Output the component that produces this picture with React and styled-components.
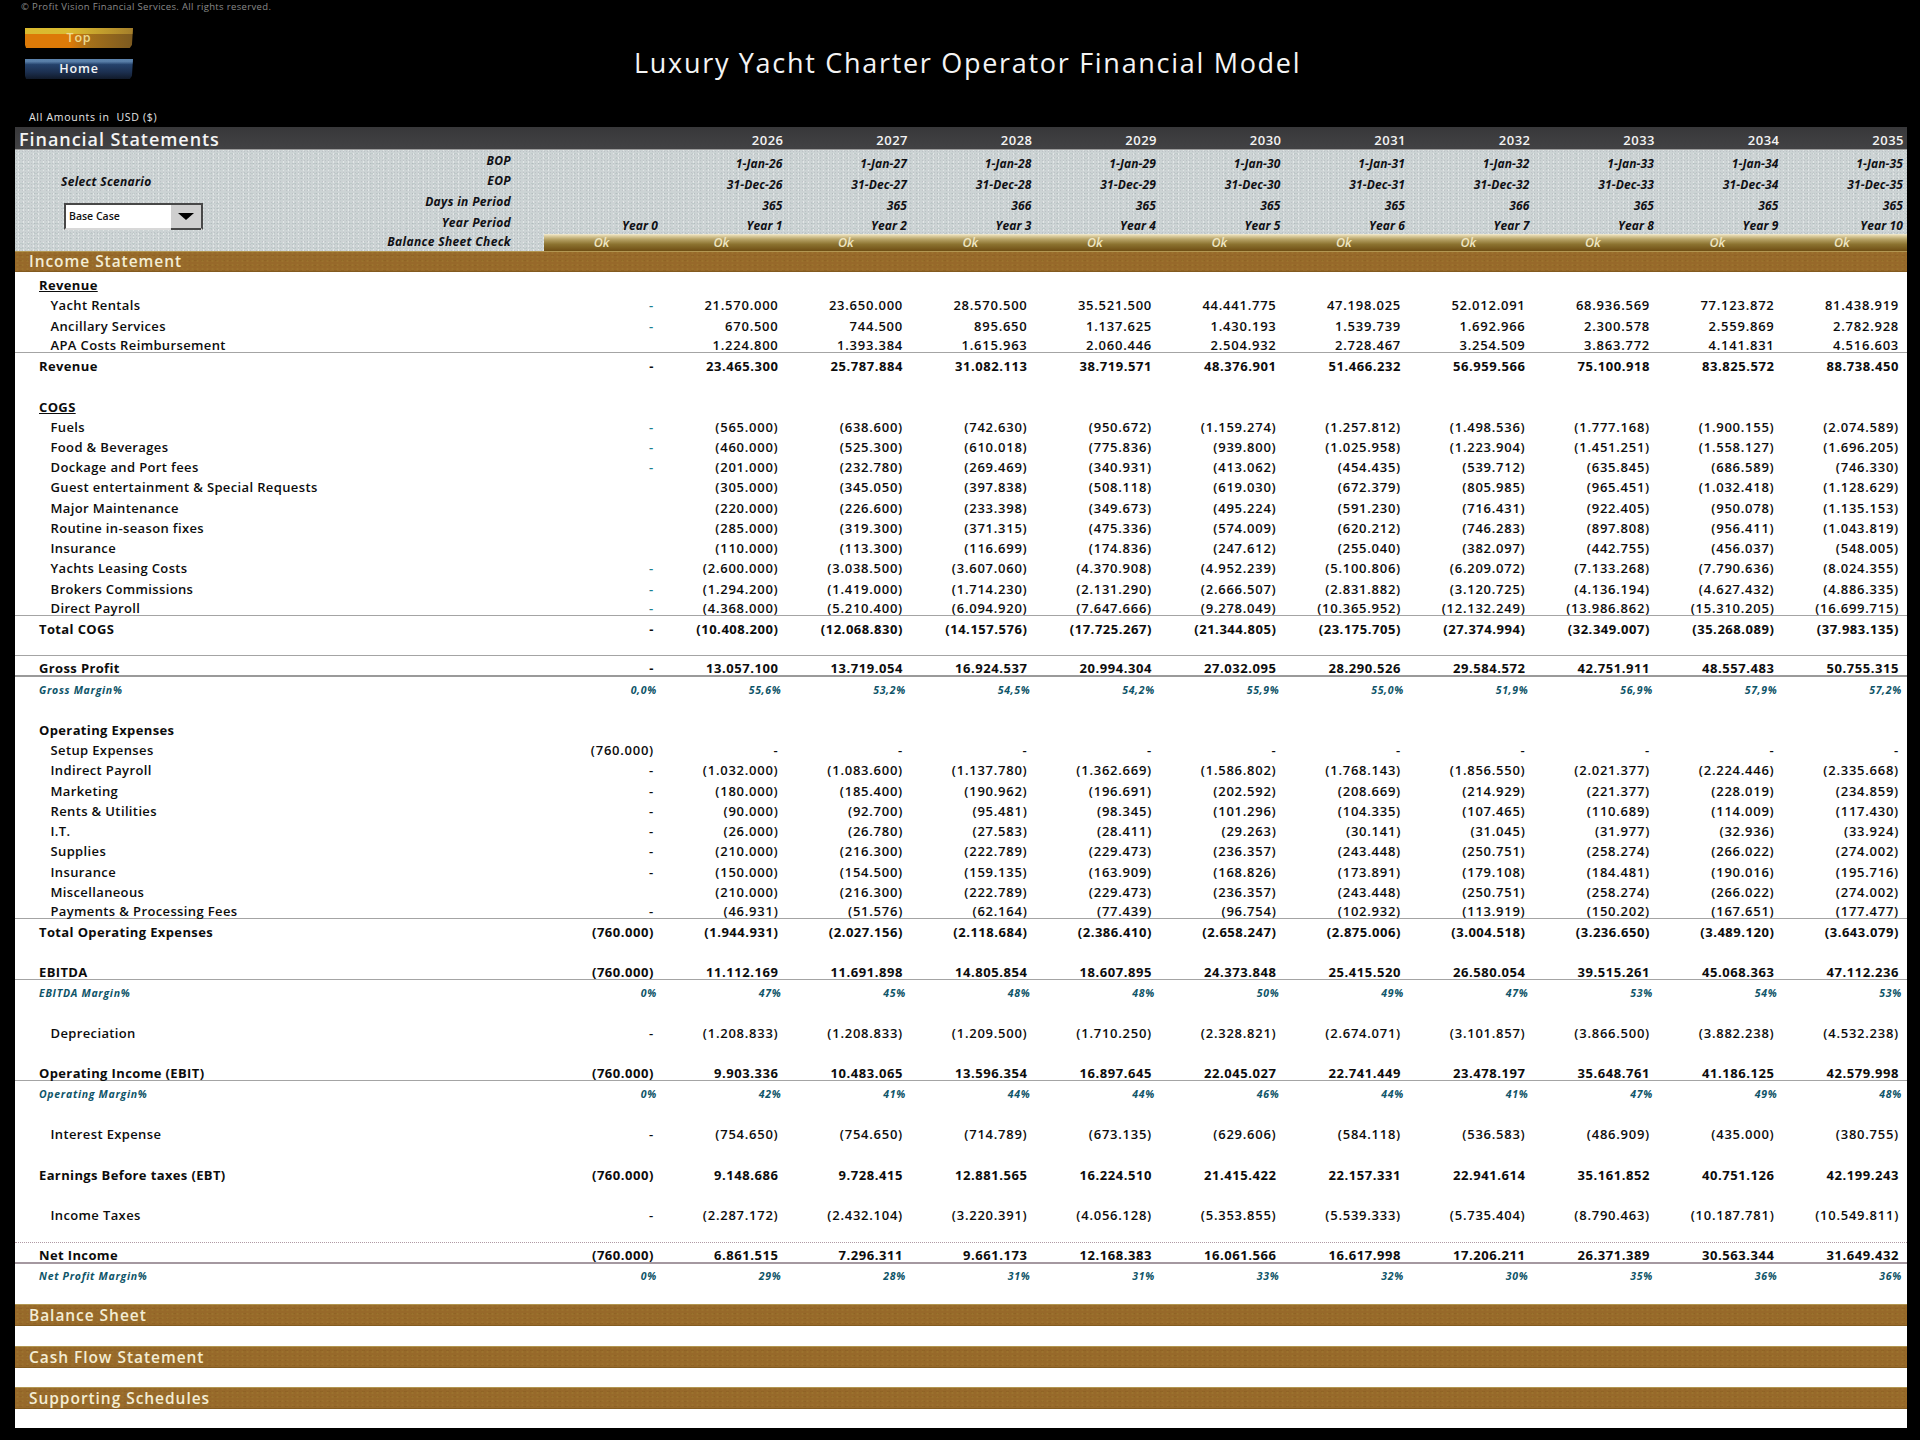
import React from "react";
import styled, { createGlobalStyle, css } from "styled-components";

const FONT = '"Open Sans", "Liberation Sans", sans-serif';

const GlobalStyle = createGlobalStyle`
  html, body {
    margin: 0;
    padding: 0;
    background: #000;
  }
  body {
    font-family: ${FONT};
  }
`;

const years = ["2026", "2027", "2028", "2029", "2030", "2031", "2032", "2033", "2034", "2035"];
const suffix = ["26", "27", "28", "29", "30", "31", "32", "33", "34", "35"];
const days = ["365", "365", "366", "365", "365", "365", "366", "365", "365", "365"];

const v = (s) => s.split(" ");

const rows = [
  { type: "head", label: "Revenue", underline: true },
  { type: "item", label: "Yacht Rentals", y0: "-", teal: true, vals: v("21.570.000 23.650.000 28.570.500 35.521.500 44.441.775 47.198.025 52.012.091 68.936.569 77.123.872 81.438.919") },
  { type: "item", label: "Ancillary Services", y0: "-", teal: true, vals: v("670.500 744.500 895.650 1.137.625 1.430.193 1.539.739 1.692.966 2.300.578 2.559.869 2.782.928") },
  { type: "item", label: "APA Costs Reimbursement", line: "thin", vals: v("1.224.800 1.393.384 1.615.963 2.060.446 2.504.932 2.728.467 3.254.509 3.863.772 4.141.831 4.516.603") },
  { type: "total", label: "Revenue", y0: "-", vals: v("23.465.300 25.787.884 31.082.113 38.719.571 48.376.901 51.466.232 56.959.566 75.100.918 83.825.572 88.738.450") },
  { type: "blank" },
  { type: "head", label: "COGS", underline: true },
  { type: "item", label: "Fuels", y0: "-", teal: true, vals: v("(565.000) (638.600) (742.630) (950.672) (1.159.274) (1.257.812) (1.498.536) (1.777.168) (1.900.155) (2.074.589)") },
  { type: "item", label: "Food & Beverages", y0: "-", teal: true, vals: v("(460.000) (525.300) (610.018) (775.836) (939.800) (1.025.958) (1.223.904) (1.451.251) (1.558.127) (1.696.205)") },
  { type: "item", label: "Dockage and Port fees", y0: "-", teal: true, vals: v("(201.000) (232.780) (269.469) (340.931) (413.062) (454.435) (539.712) (635.845) (686.589) (746.330)") },
  { type: "item", label: "Guest entertainment & Special Requests", vals: v("(305.000) (345.050) (397.838) (508.118) (619.030) (672.379) (805.985) (965.451) (1.032.418) (1.128.629)") },
  { type: "item", label: "Major Maintenance", vals: v("(220.000) (226.600) (233.398) (349.673) (495.224) (591.230) (716.431) (922.405) (950.078) (1.135.153)") },
  { type: "item", label: "Routine in-season fixes", vals: v("(285.000) (319.300) (371.315) (475.336) (574.009) (620.212) (746.283) (897.808) (956.411) (1.043.819)") },
  { type: "item", label: "Insurance", vals: v("(110.000) (113.300) (116.699) (174.836) (247.612) (255.040) (382.097) (442.755) (456.037) (548.005)") },
  { type: "item", label: "Yachts Leasing Costs", y0: "-", teal: true, vals: v("(2.600.000) (3.038.500) (3.607.060) (4.370.908) (4.952.239) (5.100.806) (6.209.072) (7.133.268) (7.790.636) (8.024.355)") },
  { type: "item", label: "Brokers Commissions", y0: "-", teal: true, vals: v("(1.294.200) (1.419.000) (1.714.230) (2.131.290) (2.666.507) (2.831.882) (3.120.725) (4.136.194) (4.627.432) (4.886.335)") },
  { type: "item", label: "Direct Payroll", y0: "-", teal: true, line: "thin", vals: v("(4.368.000) (5.210.400) (6.094.920) (7.647.666) (9.278.049) (10.365.952) (12.132.249) (13.986.862) (15.310.205) (16.699.715)") },
  { type: "total", label: "Total COGS", y0: "-", vals: v("(10.408.200) (12.068.830) (14.157.576) (17.725.267) (21.344.805) (23.175.705) (27.374.994) (32.349.007) (35.268.089) (37.983.135)") },
  { type: "blank", line: "thin" },
  { type: "total", label: "Gross Profit", y0: "-", line: "thick", vals: v("13.057.100 13.719.054 16.924.537 20.994.304 27.032.095 28.290.526 29.584.572 42.751.911 48.557.483 50.755.315") },
  { type: "pct", label: "Gross Margin%", y0: "0,0%", vals: v("55,6% 53,2% 54,5% 54,2% 55,9% 55,0% 51,9% 56,9% 57,9% 57,2%") },
  { type: "blank" },
  { type: "head", label: "Operating Expenses" },
  { type: "item", label: "Setup Expenses", y0: "(760.000)", vals: v("- - - - - - - - - -") },
  { type: "item", label: "Indirect Payroll", y0: "-", vals: v("(1.032.000) (1.083.600) (1.137.780) (1.362.669) (1.586.802) (1.768.143) (1.856.550) (2.021.377) (2.224.446) (2.335.668)") },
  { type: "item", label: "Marketing", y0: "-", vals: v("(180.000) (185.400) (190.962) (196.691) (202.592) (208.669) (214.929) (221.377) (228.019) (234.859)") },
  { type: "item", label: "Rents & Utilities", y0: "-", vals: v("(90.000) (92.700) (95.481) (98.345) (101.296) (104.335) (107.465) (110.689) (114.009) (117.430)") },
  { type: "item", label: "I.T.", y0: "-", vals: v("(26.000) (26.780) (27.583) (28.411) (29.263) (30.141) (31.045) (31.977) (32.936) (33.924)") },
  { type: "item", label: "Supplies", y0: "-", vals: v("(210.000) (216.300) (222.789) (229.473) (236.357) (243.448) (250.751) (258.274) (266.022) (274.002)") },
  { type: "item", label: "Insurance", y0: "-", vals: v("(150.000) (154.500) (159.135) (163.909) (168.826) (173.891) (179.108) (184.481) (190.016) (195.716)") },
  { type: "item", label: "Miscellaneous", vals: v("(210.000) (216.300) (222.789) (229.473) (236.357) (243.448) (250.751) (258.274) (266.022) (274.002)") },
  { type: "item", label: "Payments & Processing Fees", y0: "-", line: "thin", vals: v("(46.931) (51.576) (62.164) (77.439) (96.754) (102.932) (113.919) (150.202) (167.651) (177.477)") },
  { type: "total", label: "Total Operating Expenses", y0: "(760.000)", vals: v("(1.944.931) (2.027.156) (2.118.684) (2.386.410) (2.658.247) (2.875.006) (3.004.518) (3.236.650) (3.489.120) (3.643.079)") },
  { type: "blank" },
  { type: "total", label: "EBITDA", y0: "(760.000)", line: "thin", vals: v("11.112.169 11.691.898 14.805.854 18.607.895 24.373.848 25.415.520 26.580.054 39.515.261 45.068.363 47.112.236") },
  { type: "pct", label: "EBITDA Margin%", y0: "0%", vals: v("47% 45% 48% 48% 50% 49% 47% 53% 54% 53%") },
  { type: "blank" },
  { type: "item", label: "Depreciation", y0: "-", vals: v("(1.208.833) (1.208.833) (1.209.500) (1.710.250) (2.328.821) (2.674.071) (3.101.857) (3.866.500) (3.882.238) (4.532.238)") },
  { type: "blank" },
  { type: "total", label: "Operating Income (EBIT)", y0: "(760.000)", line: "thin", vals: v("9.903.336 10.483.065 13.596.354 16.897.645 22.045.027 22.741.449 23.478.197 35.648.761 41.186.125 42.579.998") },
  { type: "pct", label: "Operating Margin%", y0: "0%", vals: v("42% 41% 44% 44% 46% 44% 41% 47% 49% 48%") },
  { type: "blank" },
  { type: "item", label: "Interest Expense", y0: "-", vals: v("(754.650) (754.650) (714.789) (673.135) (629.606) (584.118) (536.583) (486.909) (435.000) (380.755)") },
  { type: "blank" },
  { type: "total", label: "Earnings Before taxes (EBT)", y0: "(760.000)", vals: v("9.148.686 9.728.415 12.881.565 16.224.510 21.415.422 22.157.331 22.941.614 35.161.852 40.751.126 42.199.243") },
  { type: "blank" },
  { type: "item", label: "Income Taxes", y0: "-", vals: v("(2.287.172) (2.432.104) (3.220.391) (4.056.128) (5.353.855) (5.539.333) (5.735.404) (8.790.463) (10.187.781) (10.549.811)") },
  { type: "blank", line: "dotted" },
  { type: "total", label: "Net Income", y0: "(760.000)", line: "net", vals: v("6.861.515 7.296.311 9.661.173 12.168.383 16.061.566 16.617.998 17.206.211 26.371.389 30.563.344 31.649.432") },
  { type: "pct", label: "Net Profit Margin%", y0: "0%", vals: v("29% 28% 31% 31% 33% 32% 30% 35% 36% 36%") },
];

const Page = styled.div`
  width: 1920px;
  height: 1440px;
  background: #000;
  box-sizing: border-box;
  padding-bottom: 12px;
  overflow: hidden;
`;

const Copyright = styled.div`
  height: 14px;
  padding-left: 21px;
  font-size: 9.5px;
  line-height: 14px;
  letter-spacing: 0.35px;
  color: #8a8a8a;
`;

const TopArea = styled.header`
  height: 113px;
  display: flex;
`;

const LeftCol = styled.div`
  width: 133px;
  padding-top: 14px;
  display: flex;
  flex-direction: column;
`;

const NavButton = styled.div`
  width: 108px;
  height: 20px;
  margin: 0 0 11px 25px;
  text-align: center;
  font-size: 12.5px;
  font-weight: 600;
  line-height: 20px;
  letter-spacing: 0.8px;
  clip-path: polygon(0 0, 100% 0, 99% 85%, 97% 100%, 1% 100%, 0 85%);
  ${(p) =>
    p.$tone === "gold"
      ? css`
          color: #ecdc92;
          background: linear-gradient(90deg, rgba(218, 190, 50, 0.95) 0 40%, rgba(190, 150, 50, 0.6) 100%) top / 100% 30% no-repeat,
            linear-gradient(90deg, #dc7a08 0 42%, #a4701a 60%, #7c5a20 100%);
        `
      : css`
          color: #f2f4f6;
          background: linear-gradient(180deg, rgba(110, 150, 190, 0.7) 0 12%, rgba(110, 150, 190, 0) 28%),
            linear-gradient(180deg, #2c5080 0%, #1c3050 65%, #111a2a 100%);
        `}
`;

const AmountsNote = styled.div`
  margin: 20px 0 0 29px;
  width: 200px;
  font-size: 10.5px;
  line-height: 14px;
  letter-spacing: 0.7px;
  color: #e6e6e6;
  white-space: pre;
`;

const Title = styled.h1`
  margin: 32px 0 0 501px;
  font-size: 27px;
  font-weight: 400;
  line-height: 34px;
  letter-spacing: 1.7px;
  color: #f4f4f4;
  white-space: nowrap;
`;

const Sheet = styled.main`
  margin-left: 15px;
  width: 1892px;
  height: 1301px;
  background: #fff;
`;

const DarkBar = styled.div`
  height: 23px;
  display: grid;
  grid-template-columns: 644px repeat(10, 124.5px);
  align-items: center;
  background: linear-gradient(180deg, #38383a 0%, #424244 100%);
  border-bottom: 1px solid #9a9a9a;
  box-sizing: border-box;
  color: #f4f4f4;
`;

const SheetName = styled.div`
  padding-left: 4px;
  font-size: 18px;
  font-weight: 600;
  letter-spacing: 0.95px;
`;

const YearCell = styled.div`
  text-align: right;
  font-size: 13px;
  font-weight: 600;
  letter-spacing: 0.5px;
  padding-top: 2px;
`;

const Band = styled.section`
  height: 101px;
  display: flex;
  background-color: #ccd3d4;
  background-image: radial-gradient(rgba(130, 125, 140, 0.2) 0.8px, transparent 1px),
    radial-gradient(rgba(255, 255, 255, 0.45) 0.8px, transparent 1px),
    radial-gradient(rgba(150, 175, 170, 0.25) 1px, transparent 1.2px);
  background-size: 3px 3px, 5px 4px, 7px 5px;
  background-position: 0 0, 1px 2px, 3px 1px;
`;

const ScenarioCol = styled.div`
  width: 300px;
  padding: 23px 0 0 46px;
  box-sizing: border-box;
`;

const BandText = styled.div`
  font-size: 12px;
  font-weight: 700;
  font-style: italic;
  color: #101014;
  white-space: nowrap;
`;

const ScenarioLabel = styled(BandText)`
  line-height: 18px;
  letter-spacing: 0.3px;
`;

const Select = styled.div`
  margin: 12px 0 0 3px;
  width: 139px;
  height: 27px;
  display: flex;
  box-sizing: border-box;
  border: 2px solid #484848;
  border-bottom-color: #d8d8d8;
  background: #fff;
`;

const SelectValue = styled.div`
  flex: 1;
  padding: 4px 0 0 3px;
  font-size: 10.5px;
  font-weight: 600;
  color: #111;
`;

const SelectArrow = styled.div`
  width: 30px;
  display: flex;
  align-items: center;
  justify-content: center;
  background: #cfcfcf;
  border-bottom: 2px solid #484848;
  margin-bottom: -2px;
  &::before {
    content: "";
    border-style: solid;
    border-width: 7px 8px 0 8px;
    border-color: #000 transparent transparent transparent;
  }
`;

const LabelCol = styled.div`
  width: 196px;
  padding-top: 0.6px;
  text-align: right;
`;

const BandLabel = styled(BandText)`
  line-height: 20.8px;
  letter-spacing: 0.35px;
  &:last-child {
    margin-top: -1.5px;
  }
`;

const ValuesCol = styled.div`
  padding-top: 5px;
  display: flex;
  flex-direction: column;
  gap: 2.8px;
`;

const ValueRow = styled.div`
  height: 18px;
  display: grid;
  grid-template-columns: 148px repeat(10, 124.5px);
  line-height: 18px;
`;

const ValueCell = styled(BandText)`
  text-align: right;
  padding-right: 1px;
  letter-spacing: 0.1px;
`;

const OkBar = styled.div`
  height: 16.6px;
  margin: -3.8px 0 0 33px;
  display: grid;
  grid-template-columns: 115px repeat(10, 124.5px);
  background: linear-gradient(180deg, #f4ecd4 0%, #e0d2a6 10%, #b8a468 30%, #8c7330 60%, #6e4e14 100%);
  width: 1363px;
`;

const OkCell = styled.div`
  text-align: center;
  font-size: 12.5px;
  font-style: italic;
  font-weight: 600;
  line-height: 17px;
  color: #efe6c2;
`;

const GoldBar = styled.div`
  box-sizing: border-box;
  height: ${(p) => p.$h}px;
  padding-left: 14px;
  font-size: 15.5px;
  font-weight: 600;
  letter-spacing: 0.95px;
  line-height: ${(p) => p.$h}px;
  color: #f3edd4;
  background-color: #97692a;
  background-image: radial-gradient(rgba(165, 135, 55, 0.35) 1px, transparent 1.3px),
    radial-gradient(rgba(125, 85, 25, 0.28) 1px, transparent 1.3px);
  background-size: 5px 4px, 7px 5px;
  background-position: 0 0, 2px 2px;
  box-shadow: inset 0 1px 0 rgba(190, 170, 100, 0.7), inset 0 -1px 0 rgba(110, 75, 20, 0.5);
`;

const lineStyles = {
  thin: "border-bottom: 1px solid #a4a4a4;",
  thick: "border-bottom: 1px solid #9a9a9a; box-shadow: 0 1px 0 #9a9a9a;",
  dotted: "border-bottom: 1px dotted #b09aa4;",
  net: "border-bottom: 1px solid #a498a0; box-shadow: 0 1px 0 #a498a0;",
};

const Row = styled.div`
  height: 20.23px;
  box-sizing: border-box;
  display: grid;
  grid-template-columns: 519.5px repeat(11, 124.5px);
  align-items: end;
  line-height: 13px;
  color: #0c0c0c;
  ${(p) => p.$line && lineStyles[p.$line]}
`;

const Label = styled.div`
  padding-left: ${(p) => (p.$kind === "item" ? 35.5 : 24)}px;
  font-size: ${(p) => (p.$kind === "pct" ? 10.5 : 13)}px;
  font-weight: ${(p) => (p.$kind === "item" ? 600 : 700)};
  font-style: ${(p) => (p.$kind === "pct" ? "italic" : "normal")};
  color: ${(p) => (p.$kind === "pct" ? "#0e5468" : "#0c0c0c")};
  letter-spacing: ${(p) => (p.$kind === "pct" ? 0.7 : 0.37)}px;
  text-decoration: ${(p) => (p.$underline ? "underline" : "none")};
  white-space: nowrap;
`;

const Num = styled.div`
  text-align: right;
  padding-right: ${(p) => (p.$kind === "pct" ? 2 : 5)}px;
  font-size: ${(p) => (p.$kind === "pct" ? 10.5 : 13)}px;
  font-weight: ${(p) => (p.$kind === "item" ? 600 : 700)};
  font-style: ${(p) => (p.$kind === "pct" ? "italic" : "normal")};
  letter-spacing: ${(p) => (p.$kind === "pct" ? 0.7 : p.$kind === "total" ? 0.55 : 0.75)}px;
  color: ${(p) => (p.$kind === "pct" ? "#0e5468" : p.$teal ? "#1c8090" : "#0c0c0c")};
  white-space: nowrap;
`;

const SectionList = styled.div`
  margin-top: 21px;
  display: flex;
  flex-direction: column;
  gap: 19.6px;
`;

const TableRow = ({ row }) => {
  if (row.type === "blank") return <Row $line={row.line} />;
  return (
    <Row $line={row.line}>
      <Label $kind={row.type} $underline={row.underline}>
        {row.label}
      </Label>
      {row.type !== "head" && (
        <Num $kind={row.type} $teal={row.teal}>
          {row.y0}
        </Num>
      )}
      {(row.vals || []).map((val, i) => (
        <Num key={i} $kind={row.type}>
          {val}
        </Num>
      ))}
    </Row>
  );
};

const App = () => {
  return (
    <Page>
      <GlobalStyle />
      <Copyright>© Profit Vision Financial Services. All rights reserved.</Copyright>
      <TopArea>
        <LeftCol>
          <NavButton $tone="gold">Top</NavButton>
          <NavButton $tone="blue">Home</NavButton>
          <AmountsNote>All Amounts in  USD ($)</AmountsNote>
        </LeftCol>
        <Title>Luxury Yacht Charter Operator Financial Model</Title>
      </TopArea>

      <Sheet>
        <DarkBar>
          <SheetName>Financial Statements</SheetName>
          {years.map((y) => (
            <YearCell key={y}>{y}</YearCell>
          ))}
        </DarkBar>

        <Band>
          <ScenarioCol>
            <ScenarioLabel>Select Scenario</ScenarioLabel>
            <Select>
              <SelectValue>Base Case</SelectValue>
              <SelectArrow />
            </Select>
          </ScenarioCol>
          <LabelCol>
            <BandLabel>BOP</BandLabel>
            <BandLabel>EOP</BandLabel>
            <BandLabel>Days in Period</BandLabel>
            <BandLabel>Year Period</BandLabel>
            <BandLabel>Balance Sheet Check</BandLabel>
          </LabelCol>
          <ValuesCol>
            <ValueRow>
              <div />
              {suffix.map((s) => (
                <ValueCell key={s}>1-Jan-{s}</ValueCell>
              ))}
            </ValueRow>
            <ValueRow>
              <div />
              {suffix.map((s) => (
                <ValueCell key={s}>31-Dec-{s}</ValueCell>
              ))}
            </ValueRow>
            <ValueRow>
              <div />
              {days.map((d, i) => (
                <ValueCell key={i}>{d}</ValueCell>
              ))}
            </ValueRow>
            <ValueRow>
              <ValueCell>Year 0</ValueCell>
              {years.map((y, i) => (
                <ValueCell key={y}>Year {i + 1}</ValueCell>
              ))}
            </ValueRow>
            <OkBar>
              {Array.from({ length: 11 }).map((_, i) => (
                <OkCell key={i}>Ok</OkCell>
              ))}
            </OkBar>
          </ValuesCol>
        </Band>

        <GoldBar $h={21}>Income Statement</GoldBar>

        {rows.map((row, i) => (
          <TableRow key={i} row={row} />
        ))}

        <SectionList>
          <GoldBar $h={22}>Balance Sheet</GoldBar>
          <GoldBar $h={22}>Cash Flow Statement</GoldBar>
          <GoldBar $h={22}>Supporting Schedules</GoldBar>
        </SectionList>
      </Sheet>
    </Page>
  );
};

export default App;
